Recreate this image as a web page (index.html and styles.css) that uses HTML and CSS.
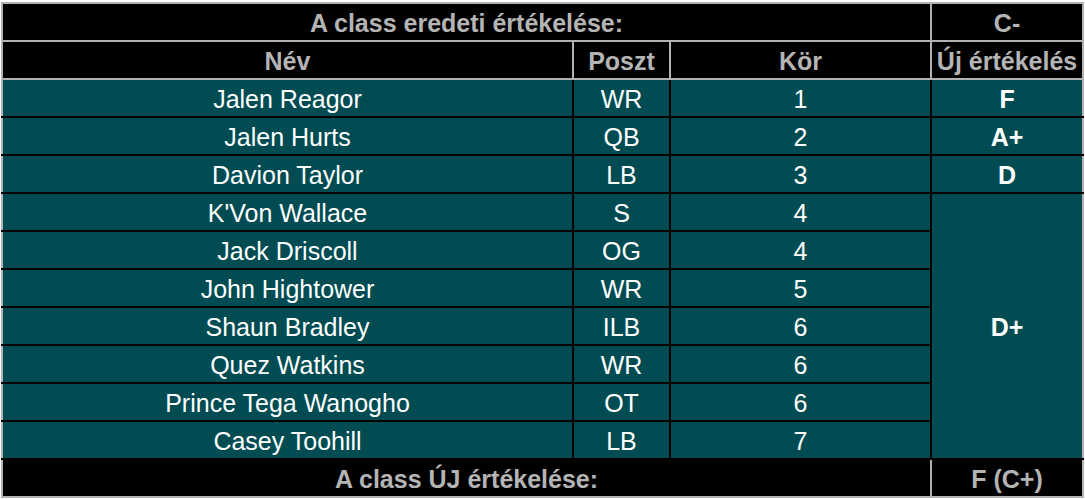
FILE: index.html
```html
<!DOCTYPE html>
<html lang="hu">
<head>
<meta charset="utf-8">
<title>Draft értékelés</title>
<link rel="stylesheet" href="styles.css">
</head>
<body>
<table class="grades">
  <colgroup>
    <col class="c-name">
    <col class="c-pos">
    <col class="c-round">
    <col class="c-grade">
  </colgroup>
  <thead>
    <tr class="hrow">
      <th colspan="3">A class eredeti értékelése:</th>
      <th>C-</th>
    </tr>
    <tr class="hrow">
      <th>Név</th>
      <th>Poszt</th>
      <th>Kör</th>
      <th>Új értékelés</th>
    </tr>
  </thead>
  <tbody>
    <tr><td class="first">Jalen Reagor</td><td>WR</td><td>1</td><td class="grade last">F</td></tr>
    <tr><td class="first">Jalen Hurts</td><td>QB</td><td>2</td><td class="grade last">A+</td></tr>
    <tr><td class="first">Davion Taylor</td><td>LB</td><td>3</td><td class="grade last">D</td></tr>
    <tr><td class="first">K'Von Wallace</td><td>S</td><td>4</td><td class="grade last" rowspan="7">D+</td></tr>
    <tr><td class="first">Jack Driscoll</td><td>OG</td><td>4</td></tr>
    <tr><td class="first">John Hightower</td><td>WR</td><td>5</td></tr>
    <tr><td class="first">Shaun Bradley</td><td>ILB</td><td>6</td></tr>
    <tr><td class="first">Quez Watkins</td><td>WR</td><td>6</td></tr>
    <tr><td class="first">Prince Tega Wanogho</td><td>OT</td><td>6</td></tr>
    <tr><td class="first">Casey Toohill</td><td>LB</td><td>7</td></tr>
  </tbody>
  <tfoot>
    <tr class="hrow">
      <th colspan="3">A class ÚJ értékelése:</th>
      <th>F (C+)</th>
    </tr>
  </tfoot>
</table>
</body>
</html>
```

FILE: styles.css
```css
body {
  margin: 2px 0 0 1px;
  background: #ffffff;
  font-family: "Liberation Sans", Arial, sans-serif;
}

.grades {
  border-collapse: collapse;
  table-layout: fixed;
  width: 1083px;
  font-size: 25px;
}

.c-name { width: 571px; }
.c-pos { width: 97px; }
.c-round { width: 261px; }
.c-grade { width: 152px; }

.grades tr {
  height: 38px;
}

.grades th,
.grades td {
  padding: 2px 0 0;
  text-align: center;
  vertical-align: middle;
  line-height: 28px;
  white-space: nowrap;
}

.grades th {
  background: #000000;
  color: #b4b4b4;
  font-weight: bold;
  border: 2px solid #b2b2b2;
}

.grades td {
  background: #004c52;
  color: #ffffff;
  font-weight: normal;
  border: 2px solid #000000;
}

.grades td.first {
  border-left-color: #b2b2b2;
}

.grades td.last {
  border-right-color: #b2b2b2;
}

.grades td.grade {
  font-weight: bold;
}
```
